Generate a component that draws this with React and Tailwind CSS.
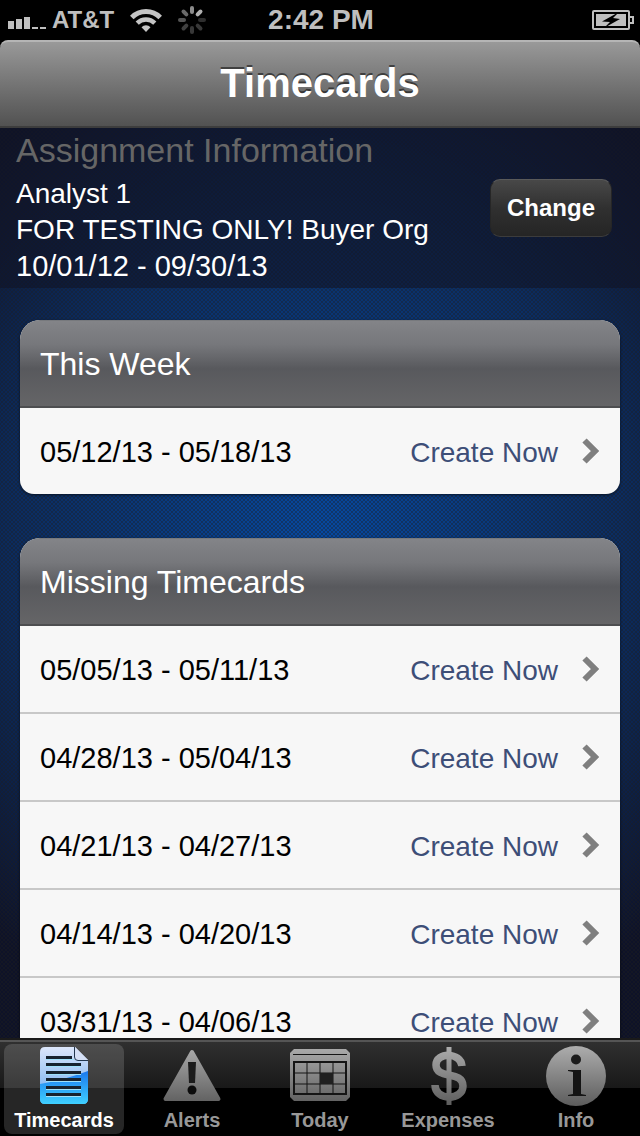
import React, { useState } from 'react';

const SignalIcon = () => (
    <svg viewBox="0 0 38 12" className="w-[38px] h-3 mt-1.5" fill="#bfbfbf" aria-hidden="true">
        <rect x="0" y="4" width="6" height="8" />
        <rect x="8" y="2" width="6" height="10" />
        <rect x="16" y="0" width="6" height="12" />
        <rect x="24" y="10" width="6" height="2" />
        <rect x="32" y="10" width="6" height="2" />
    </svg>
);

const WifiIcon = () => (
    <svg viewBox="0 0 32 24" className="w-8 h-6" fill="none" stroke="#c4c4c4" aria-hidden="true">
        <path d="M1.800 9.400A20 20 0 0 1 30.200 9.400" strokeWidth="5" />
        <path d="M7.200 15.200A12.500 12.500 0 0 1 24.800 15.200" strokeWidth="4.500" />
        <path d="M16 24L11.500 19.200A6.300 6.300 0 0 1 20.500 19.200Z" fill="#c4c4c4" stroke="none" />
    </svg>
);

const spokes = ['#8c8c8c', '#b0b0b0', '#2e2e2e', '#383838', '#383838', '#404040', '#555555', '#6a6a6a'];

const SpinnerIcon = () => (
    <svg viewBox="-14 -14 28 28" className="w-7 h-7" strokeWidth="4" strokeLinecap="round" aria-hidden="true">
        {spokes.map((color, i) => (
            <line key={i} x1="0" y1="-8" x2="0" y2="-12" stroke={color} transform={`rotate(${i * 45})`} />
        ))}
    </svg>
);

const BatteryIcon = () => (
    <svg viewBox="0 0 42 20" className="w-[42px] h-5" aria-hidden="true">
        <rect x="1" y="1" width="36" height="18" rx="1" fill="none" stroke="#bfbfbf" strokeWidth="2" />
        <path d="M38 7H41V13H38" fill="none" stroke="#bfbfbf" strokeWidth="2" />
        <rect x="4" y="4" width="30" height="12" fill="#bfbfbf" />
        <path d="M27 2L10 11.500L18 12L12 18L28 9L21 8Z" fill="#000" />
    </svg>
);

const Chevron = () => (
    <svg viewBox="0 0 18 26" className="w-[18px] h-[26px] shrink-0" aria-hidden="true">
        <path d="M2.500 2.500L13 13L2.500 23.500" fill="none" stroke="#7f7f7f" strokeWidth="6" />
    </svg>
);

/* Shared grey shading of the unselected tab icons */
const GreyShade = ({ id }) => (
    <defs>
        <linearGradient id={id} gradientUnits="userSpaceOnUse" x1="0" y1="0" x2="0" y2="60">
            <stop offset="0" stopColor="#adadad" />
            <stop offset="1" stopColor="#5c5c5c" />
        </linearGradient>
    </defs>
);

const TimecardsIcon = () => (
    <svg viewBox="0 0 60 60" className="w-15 h-15" aria-hidden="true">
        <defs>
            <linearGradient id="sheet" x1="0" y1="0" x2="0" y2="1">
                <stop offset="0" stopColor="#dce6fa" />
                <stop offset="1" stopColor="#68a8ee" />
            </linearGradient>
            <linearGradient id="sheetLow" x1="0" y1="0" x2="0" y2="1">
                <stop offset="0" stopColor="#1b78ee" />
                <stop offset="1" stopColor="#3fd0ff" />
            </linearGradient>
        </defs>
        <path d="M11 1H41L54 14V53Q54 58 49 58H11Q6 58 6 53V6Q6 1 11 1Z" fill="url(#sheet)" />
        <path d="M6 38Q30 34 54 25V53Q54 58 49 58H11Q6 58 6 53Z" fill="url(#sheetLow)" />
        <path d="M41 1V11Q41 14 44 14H54Z" fill="#d5e0f6" />
        <path d="M40.500 1V11Q40.500 14.500 44 14.500H54" fill="none" stroke="#23374f" strokeWidth="1" />
        <path d="M12 13.500H40M12 20.500H47M12 28.500H47M12 35.500H47M12 43.500H47M12 50.500H47" stroke="#9fe0fa" strokeWidth="1" />
        <path d="M12 11.500H38M12 18.500H47M12 26.500H47M12 33.500H47M12 41.500H47M12 48.500H47" stroke="#17222e" strokeWidth="3" />
    </svg>
);

const AlertsIcon = () => (
    <svg viewBox="0 0 60 60" className="w-15 h-15" aria-hidden="true">
        <GreyShade id="greyAlerts" />
        <path d="M30 6L56.500 53H3.500Z" fill="url(#greyAlerts)" stroke="url(#greyAlerts)" strokeWidth="4" strokeLinejoin="round" />
        <path d="M26 16H34L33 37H27Z" fill="#1c1c1c" />
        <circle cx="30" cy="44" r="4.500" fill="#0c0c0c" />
    </svg>
);

const TodayIcon = () => (
    <svg viewBox="0 0 60 60" className="w-15 h-15" aria-hidden="true">
        <GreyShade id="greyToday" />
        <path d="M4 3H56L60 7V51L56 55H4L0 51V7Z" fill="url(#greyToday)" />
        <path d="M3 8.500H57" stroke="#151515" strokeWidth="1" />
        <rect x="4" y="16" width="52" height="32" fill="none" stroke="#151515" strokeWidth="2" />
        <path d="M17 16V48M30 16V48M43 16V48M4 27H56M4 38H56" stroke="#151515" strokeWidth="1" />
        <rect x="30" y="27" width="13" height="11" fill="#202020" />
    </svg>
);

const ExpensesIcon = () => (
    <svg viewBox="0 0 60 60" className="w-15 h-15" aria-hidden="true">
        <GreyShade id="greyExpenses" />
        <g fill="none" stroke="url(#greyExpenses)">
            <path d="M44 20C43 6 18 6 18 19C18 34 45 24 45 40C45 55 17 55 17 39" strokeWidth="7.500" />
            <path d="M31 1V59" strokeWidth="5" />
        </g>
    </svg>
);

const InfoIcon = () => (
    <svg viewBox="0 0 60 60" className="w-15 h-15" aria-hidden="true">
        <GreyShade id="greyInfo" />
        <circle cx="30" cy="30" r="30" fill="url(#greyInfo)" />
        <circle cx="30" cy="13.500" r="5" fill="#1c1c1c" />
        <path d="M22 24H35V48L40 49V50H22V49L27 48V26L22 25Z" fill="#141414" />
    </svg>
);

const sections = [
    { title: 'This Week', weeks: ['05/12/13 - 05/18/13'] },
    {
        title: 'Missing Timecards',
        weeks: [
            '05/05/13 - 05/11/13',
            '04/28/13 - 05/04/13',
            '04/21/13 - 04/27/13',
            '04/14/13 - 04/20/13',
            '03/31/13 - 04/06/13'
        ]
    }
];

const tabs = [
    { id: 'timecards', name: 'Timecards', Icon: TimecardsIcon },
    { id: 'alerts', name: 'Alerts', Icon: AlertsIcon },
    { id: 'today', name: 'Today', Icon: TodayIcon },
    { id: 'expenses', name: 'Expenses', Icon: ExpensesIcon },
    { id: 'info', name: 'Info', Icon: InfoIcon }
];

const StatusBar = () => (
    <div className="grid grid-cols-[1fr_auto_1fr] items-center h-10 shrink-0 bg-black pl-2 pr-1.5 text-[#bfbfbf] text-[28px] leading-10 font-bold">
        <div className="flex items-center">
            <SignalIcon />
            <span className="ml-1.5 text-2xl leading-10">AT&amp;T</span>
            <span className="ml-4"><WifiIcon /></span>
            <span className="ml-4"><SpinnerIcon /></span>
        </div>
        <span>2:42 PM</span>
        <div className="flex justify-end"><BatteryIcon /></div>
    </div>
);

const TimecardSection = ({ title, weeks }) => (
    <section className="rounded-t-[20px] rounded-b-[14px] overflow-hidden bg-[#f7f7f7] shadow-[0_1px_3px_rgba(0,0,0,0.6)]">
        <h2 className="h-22 px-5 text-[32px] leading-[86px] text-white border-t border-t-[#77797d] border-b-2 border-b-[#4d4e50] bg-[linear-gradient(#838488_0%,#76777b_28%,#58595d_56%,#656567_100%)]">
            {title}
        </h2>
        <ul className="divide-y-2 divide-[#c8c8c8]">
            {weeks.map((week) => (
                <li key={week}>
                    <a href="#create" className="flex items-center h-[86px] px-5">
                        <span className="pt-1 text-[29px] text-black">{week}</span>
                        <span className="pt-1 ml-auto mr-6 text-[28px] text-[#3d4e77]">Create Now</span>
                        <Chevron />
                    </a>
                </li>
            ))}
        </ul>
    </section>
);

const App = () => {
    const [activeTab, setActiveTab] = useState('timecards');

    return (
        <div className="flex flex-col h-screen overflow-hidden bg-black font-['Liberation_Sans',Arial,sans-serif]">
            <StatusBar />

            <header className="h-22 shrink-0 rounded-t-lg border-t-2 border-t-[#b5b5b5] border-b-2 border-b-[#3d3d3d] bg-linear-to-b from-[#999999] to-[#525252]">
                <h1 className="text-center text-white text-[40px] leading-[82px] font-bold [text-shadow:0_-2px_0_rgba(0,0,0,0.5)]">
                    Timecards
                </h1>
            </header>

            <main className="flex-1 min-h-0 overflow-y-auto [scrollbar-width:none] bg-[radial-gradient(rgba(30,30,30,0.4)_1px,transparent_1px),radial-gradient(rgba(30,30,30,0.4)_1px,transparent_1px),radial-gradient(ellipse_76%_58%_at_50%_45%,#0649a2,#0b2c60_62%,#0e1228)] bg-[size:4px_4px,4px_4px,100%_100%] bg-[position:0_0,2px_2px,0_0]">
                {/* Assignment Information */}
                <section className="flex items-center justify-between h-40 pl-4 pr-7 bg-[#111426]/60">
                    <div className="text-[28px] leading-9 text-white">
                        <h2 className="mb-2 text-[34px] leading-9 text-[#666666]">Assignment Information</h2>
                        <p>Analyst 1</p>
                        <p>FOR TESTING ONLY! Buyer Org</p>
                        <p className="text-[29px]">10/01/12 - 09/30/13</p>
                    </div>
                    <button
                        type="button"
                        className="h-[58px] px-4 rounded-[10px] border border-[#262626] border-t-[#5a5a5a] border-b-[#3c3c3c] bg-[linear-gradient(#484848,#303030_50%,#252525)] text-white text-2xl font-bold"
                    >
                        Change
                    </button>
                </section>

                <div className="flex flex-col gap-11 px-5 pt-8">
                    {sections.map((section) => (
                        <TimecardSection key={section.title} {...section} />
                    ))}
                </div>
            </main>

            <nav className="grid grid-cols-5 h-[98px] shrink-0 border-t-2 border-[#1a1a1a] bg-[linear-gradient(#555_0%,#555_2%,#303030_2%,#191919_50%,#000_50%)]">
                {tabs.map(({ id, name, Icon }) => (
                    <button
                        key={id}
                        type="button"
                        onClick={() => setActiveTab(id)}
                        className={`flex flex-col items-center mx-1 mt-1 mb-0.5 pt-0.5 rounded-lg text-xl font-bold
                            ${activeTab === id ? 'bg-white/15 text-white' : 'text-[#989898]'}`}
                    >
                        <Icon />
                        <span className="leading-7">{name}</span>
                    </button>
                ))}
            </nav>
        </div>
    );
};

export default App;
